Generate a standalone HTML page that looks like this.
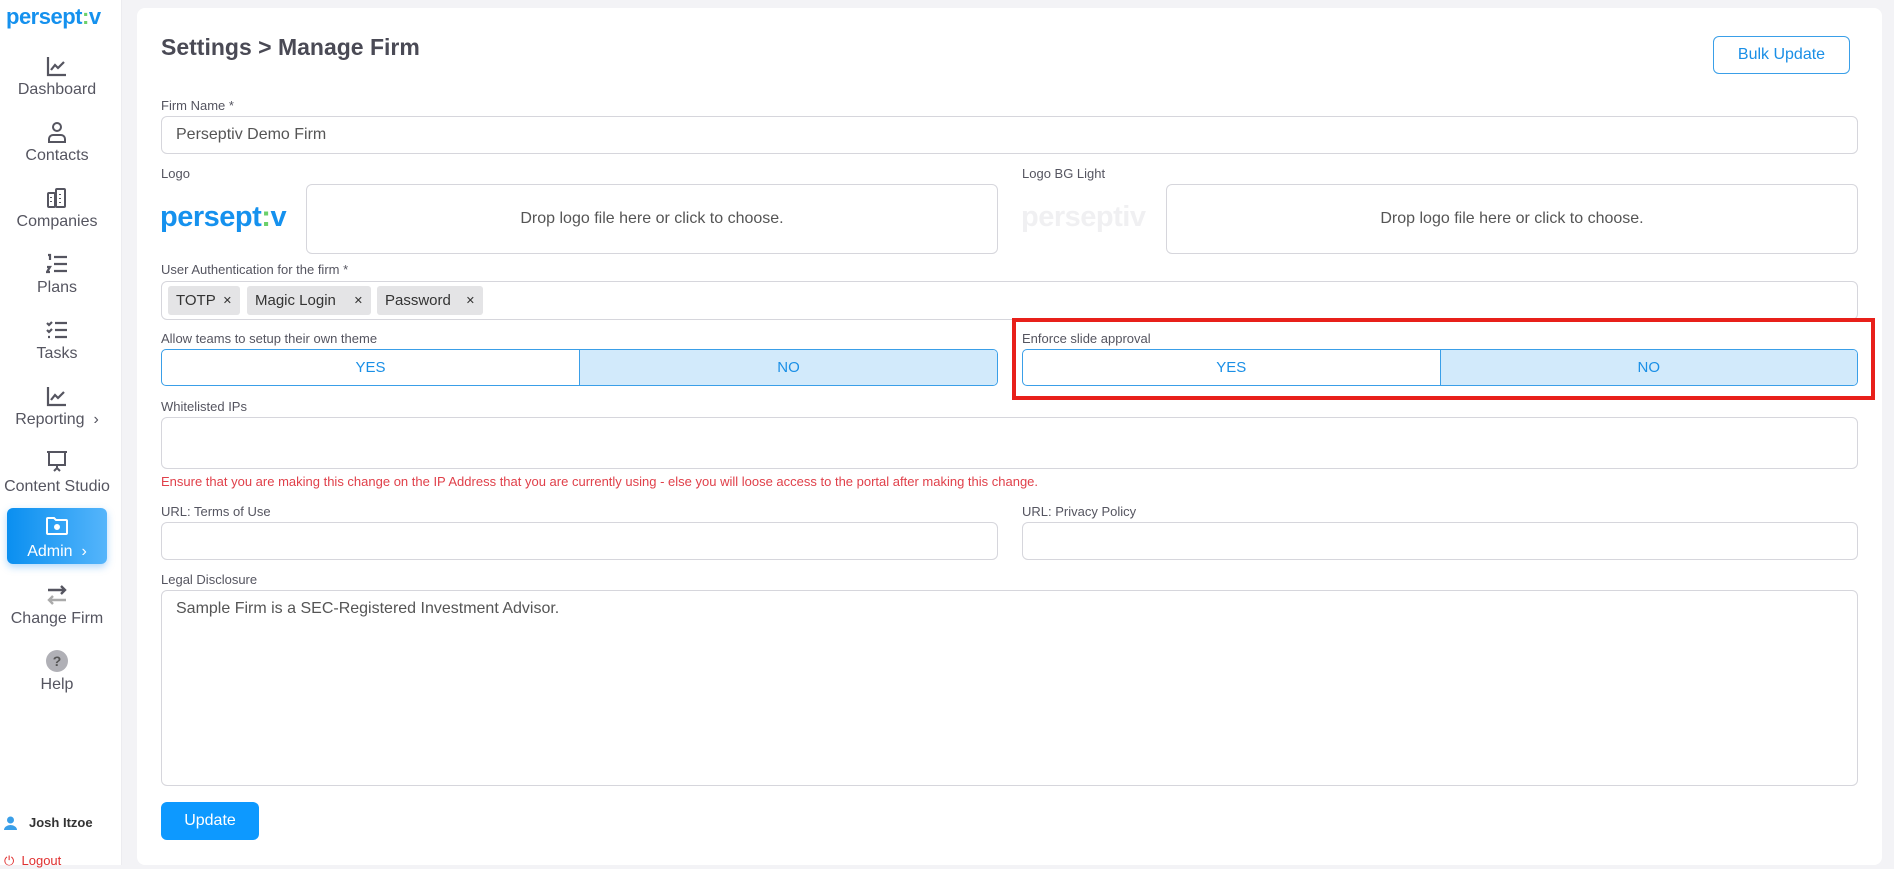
<!DOCTYPE html>
<html><head><meta charset="utf-8"><style>
*{box-sizing:border-box;margin:0;padding:0}
body{width:1894px;height:865px;overflow:hidden;background:#f3f3f6;font-family:"Liberation Sans",sans-serif;position:relative;color:#4a4a55}
.a{position:absolute}
.side{left:0;top:0;width:122px;height:865px;background:#fff;border-right:1px solid #ececf0}
.nav{position:absolute;left:0;width:114px;text-align:center;font-size:16px;color:#555560}
.nav svg{display:block;margin:0 auto 4px}
.card{left:137px;top:8px;width:1745px;height:857px;background:#fff;border-radius:8px}
.lbl{position:absolute;font-size:13px;color:#555560}
.inp{position:absolute;border:1px solid #d6d6dc;border-radius:6px;background:#fff;font-size:16px;color:#555;padding-left:14px;display:flex;align-items:center}
.drop{position:absolute;border:1px solid #d6d6dc;border-radius:6px;display:flex;align-items:center;justify-content:center;font-size:16px;color:#555}
.tg{position:absolute;display:flex;border:1px solid #3a9fe8;border-radius:5px;overflow:hidden;font-size:15px;color:#1a8fe6}
.tg div{flex:1;display:flex;align-items:center;justify-content:center}
.tg div+div{background:#d2eafb;border-left:1px solid #3a9fe8}
.tag{position:absolute;top:286px;height:29px;background:#e4e4e6;border-radius:3px;font-size:15px;color:#333;display:flex;align-items:center;justify-content:space-between;padding:0 8px}
.tag span{font-size:11px}
.logo{font-weight:bold;color:#1591ee;letter-spacing:-0.5px}
</style></head><body>
<div class="a side">
<div class="a logo" style="left:6px;top:4px;font-size:22px">persept<span style="color:#6bd06b">:</span>v</div>
<div class="nav" style="top:55px"><svg width="22" height="22" viewBox="0 0 22 22" fill="none" stroke="#555560" stroke-width="2.2"><path d="M2 2v18h18M5 15l4-5 3 3 6-6"/></svg>Dashboard</div>
<div class="nav" style="top:121px"><svg width="22" height="22" viewBox="0 0 22 22" fill="none" stroke="#555560" stroke-width="2"><circle cx="11" cy="6" r="4"/><path d="M3 21v-3a4 4 0 0 1 4-4h8a4 4 0 0 1 4 4v3z"/></svg>Contacts</div>
<div class="nav" style="top:187px"><svg width="22" height="22" viewBox="0 0 22 22" fill="none" stroke="#555560" stroke-width="2"><rect x="2" y="6" width="7" height="14" rx="1"/><rect x="10" y="2" width="9" height="18" rx="1"/><path d="M5 10v1M5 14v1M14 7v1M14 11v1M14 15v1"/></svg>Companies</div>
<div class="nav" style="top:253px"><svg width="22" height="22" viewBox="0 0 22 22" fill="none" stroke="#555560" stroke-width="2.2"><path d="M8 4h13M8 11h13M8 18h13M2 2h2v5M1 14h3l-3 5h3"/></svg>Plans</div>
<div class="nav" style="top:319px"><svg width="22" height="22" viewBox="0 0 22 22" fill="none" stroke="#555560" stroke-width="2.2"><path d="M9 4h12M9 11h12M9 18h12M1 4l2 2 3-3M1 11l2 2 3-3M2 18h2"/></svg>Tasks</div>
<div class="nav" style="top:385px"><svg width="22" height="22" viewBox="0 0 22 22" fill="none" stroke="#555560" stroke-width="2.2"><path d="M2 2v18h18M5 15l4-5 3 3 6-6"/></svg>Reporting &nbsp;›</div>
<div class="nav" style="top:450px"><svg width="24" height="24" viewBox="0 0 24 24" fill="none" stroke="#555560" stroke-width="2"><path d="M2 2h20M4 3v12h16V3M12 15v3M9 21l3-3 3 3"/></svg>Content Studio</div>
<div class="a" style="left:7px;top:508px;width:100px;height:56px;border-radius:6px;background:linear-gradient(90deg,#0a8ff0,#55b5fb);box-shadow:0 3px 8px rgba(30,140,240,.35);color:#fff;text-align:center;font-size:16px;padding-top:8px"><svg width="22" height="20" viewBox="0 0 22 20" fill="none" stroke="#fff" stroke-width="2"><path d="M1 3a1 1 0 0 1 1-1h6l2 2h10a1 1 0 0 1 1 1v12a1 1 0 0 1-1 1H2a1 1 0 0 1-1-1z"/><circle cx="11" cy="11" r="2" fill="#fff"/></svg><div style="margin-top:2px">Admin &nbsp;›</div></div>
<div class="nav" style="top:584px"><svg width="22" height="22" viewBox="0 0 22 22" fill="none" stroke-width="2.4"><path d="M2 6h17M15 2l4 4-4 4" stroke="#555560"/><path d="M20 16H3M7 12l-4 4 4 4" stroke="#aaa"/></svg>Change Firm</div>
<div class="nav" style="top:650px"><svg width="22" height="22" viewBox="0 0 22 22"><circle cx="11" cy="11" r="11" fill="#b0b0b6"/><text x="11" y="16" font-size="14" font-weight="bold" text-anchor="middle" fill="#555" font-family="Liberation Sans">?</text></svg>Help</div>
<div class="a" style="left:4px;top:815px;font-size:13px;font-weight:bold;color:#333;display:flex;align-items:center"><svg width="13" height="14" viewBox="0 0 13 14" style="margin-right:12px"><circle cx="6.5" cy="4" r="3.5" fill="#3a9fe8"/><path d="M0 14a6.5 5 0 0 1 13 0z" fill="#3a9fe8"/></svg>Josh Itzoe</div>
<div class="a" style="left:4px;top:853px;font-size:13px;color:#e03030">⏻ &nbsp;Logout</div>
</div>
<div class="a card"></div>
<div class="a" style="left:161px;top:34px;font-size:23px;font-weight:bold;color:#4a4a55">Settings &gt; Manage Firm</div>
<div class="a" style="left:1713px;top:36px;width:137px;height:38px;border:1px solid #3a9fe8;border-radius:6px;color:#1a8fe6;font-size:16px;display:flex;align-items:center;justify-content:center">Bulk Update</div>
<div class="lbl" style="left:161px;top:98px">Firm Name *</div>
<div class="inp" style="left:161px;top:116px;width:1697px;height:38px">Perseptiv Demo Firm</div>
<div class="lbl" style="left:161px;top:166px">Logo</div>
<div class="a logo" style="left:160px;top:201px;font-size:29px">persept<span style="color:#6bd06b">:</span>v</div>
<div class="drop" style="left:306px;top:184px;width:692px;height:70px">Drop logo file here or click to choose.</div>
<div class="lbl" style="left:1022px;top:166px">Logo BG Light</div>
<div class="a logo" style="left:1021px;top:201px;font-size:29px;color:#f0f0f2">perseptiv</div>
<div class="drop" style="left:1166px;top:184px;width:692px;height:70px">Drop logo file here or click to choose.</div>
<div class="lbl" style="left:161px;top:262px">User Authentication for the firm *</div>
<div class="inp" style="left:161px;top:281px;width:1697px;height:39px"></div>
<div class="tag" style="left:168px;width:72px">TOTP<span>✕</span></div>
<div class="tag" style="left:247px;width:124px">Magic Login<span>✕</span></div>
<div class="tag" style="left:377px;width:106px">Password<span>✕</span></div>
<div class="lbl" style="left:161px;top:331px">Allow teams to setup their own theme</div>
<div class="tg" style="left:161px;top:349px;width:837px;height:37px"><div>YES</div><div>NO</div></div>
<div class="lbl" style="left:1022px;top:331px">Enforce slide approval</div>
<div class="tg" style="left:1022px;top:349px;width:836px;height:37px"><div>YES</div><div>NO</div></div>
<div class="a" style="left:1012px;top:318px;width:863px;height:82px;border:4px solid #e8201a"></div>
<div class="lbl" style="left:161px;top:399px">Whitelisted IPs</div>
<div class="inp" style="left:161px;top:417px;width:1697px;height:52px"></div>
<div class="lbl" style="left:161px;top:474px;color:#e0404a">Ensure that you are making this change on the IP Address that you are currently using - else you will loose access to the portal after making this change.</div>
<div class="lbl" style="left:161px;top:504px">URL: Terms of Use</div>
<div class="inp" style="left:161px;top:522px;width:837px;height:38px"></div>
<div class="lbl" style="left:1022px;top:504px">URL: Privacy Policy</div>
<div class="inp" style="left:1022px;top:522px;width:836px;height:38px"></div>
<div class="lbl" style="left:161px;top:572px">Legal Disclosure</div>
<div class="inp" style="left:161px;top:590px;width:1697px;height:196px;align-items:flex-start;padding-top:9px">Sample Firm is a SEC-Registered Investment Advisor.</div>
<div class="a" style="left:161px;top:802px;width:98px;height:38px;border-radius:6px;background:#0d99ff;color:#fff;font-size:16px;display:flex;align-items:center;justify-content:center">Update</div>
</body></html>
